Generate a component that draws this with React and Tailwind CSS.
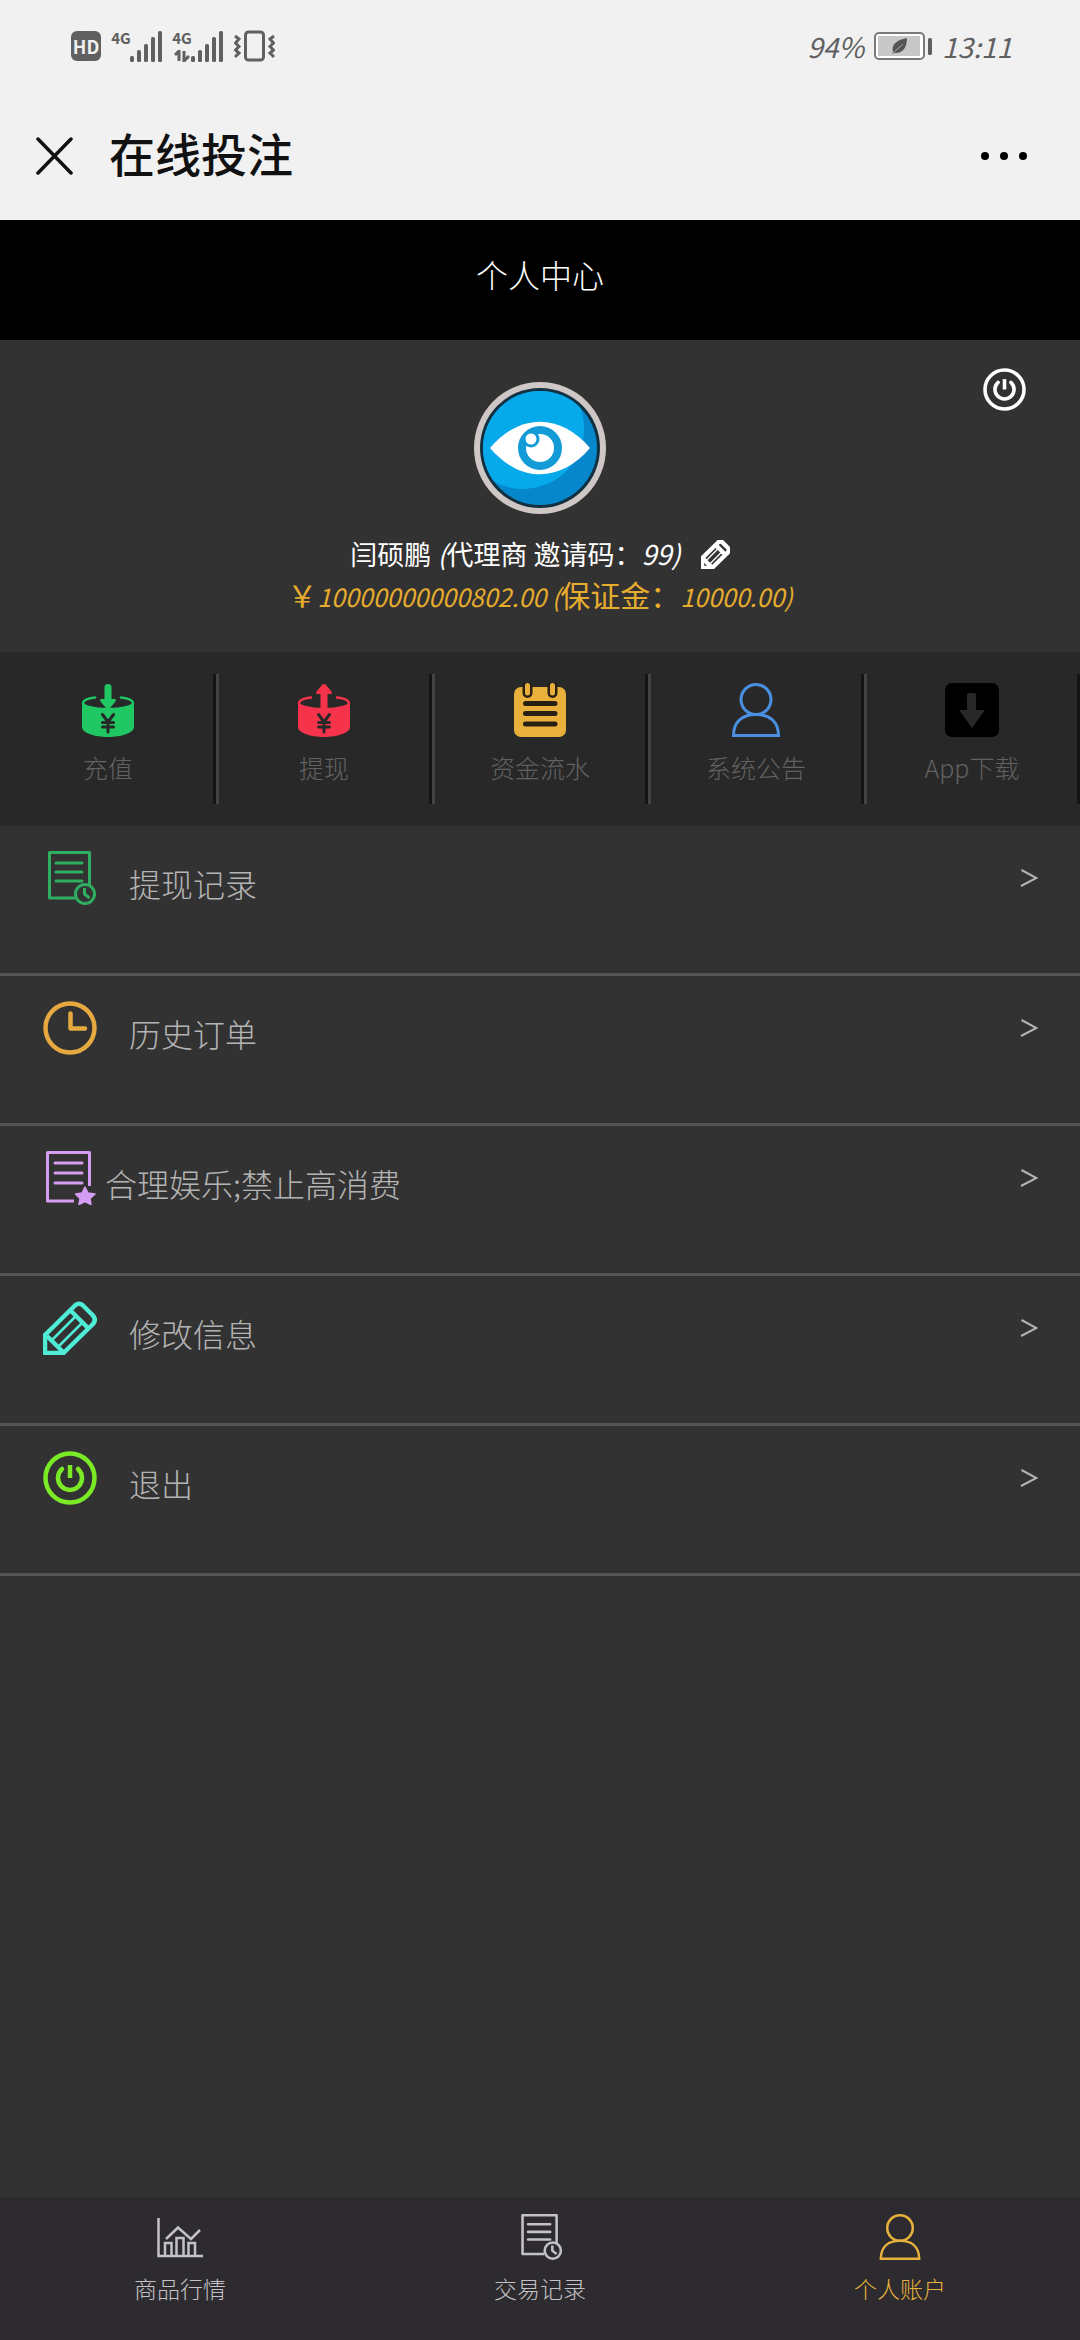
import React from "react";

const bars = [
  [0, 26, 6],
  [7, 20, 12],
  [14, 14, 18],
  [21, 7, 25],
  [28, 1, 31],
];

function Signal({ data }) {
  return (
    <div className="flex items-start">
      <div className="flex h-8 w-[18px] flex-col items-center justify-between">
        <span className="text-[15px] leading-4 font-bold">4G</span>
        {data && (
          <svg width="16" height="12" viewBox="0 0 16 12" fill="none" stroke="currentColor" strokeWidth="3">
            <path d="M1 5 L5 1 V11" />
            <path d="M10 1 V11 L15 6" />
          </svg>
        )}
      </div>
      <svg width="32" height="32" viewBox="0 0 32 32" fill="currentColor">
        {bars.map(([x, y, h]) => (
          <rect key={x} x={x} y={y} width="4" height={h} rx="1.5" />
        ))}
      </svg>
    </div>
  );
}

function StatusBar() {
  return (
    <div className="flex h-[92px] items-center justify-between pr-[68px] pl-[71px] text-[#606060]">
      <div className="flex items-center gap-[11px]">
        <div className="flex size-[30px] items-center justify-center rounded-md bg-[#606060] text-[18px] leading-none font-bold text-[#f1f1f1]">
          HD
        </div>
        <Signal />
        <Signal data />
        <svg width="41" height="32" viewBox="0 0 41 32" fill="none" stroke="currentColor" strokeWidth="3">
          <rect x="11.5" y="2" width="18" height="28" rx="3" />
          <path d="M1 6 L5 9 L1.5 13 L5 16.500 L1.500 20 L5 23 L1 27" />
          <path d="M40 6 L36 9 L39.500 13 L36 16.500 L39.500 20 L36 23 L40 27" />
        </svg>
      </div>
      <div className="flex items-center gap-[10px] text-[28px] leading-none italic">
        <span>94%</span>
        <svg width="58" height="28" viewBox="0 0 58 28">
          <rect x="1" y="1" width="49" height="26" rx="4" fill="#fff" stroke="#7a7a7a" strokeWidth="2" />
          <rect x="4" y="4" width="42" height="20" fill="#c8c8c8" />
          <path d="M33 6 C22 8 17 13 19 20 L18 22 L20 21 C29 22 33 15 33 6 Z" fill="#555" />
          <path d="M19 21 L29 12" stroke="#aaa" strokeWidth="1" />
          <rect x="54" y="6" width="4" height="17" rx="1.5" fill="#606060" />
        </svg>
        <span>13:11</span>
      </div>
    </div>
  );
}

function TitleBar() {
  return (
    <div className="flex h-32 items-center pr-[53px] text-[#111] pl-9">
      <button aria-label="关闭">
        <svg width="37" height="38" viewBox="0 0 37 38" stroke="currentColor" strokeWidth="3.500" strokeLinecap="round">
          <path d="M2 2 L35 36 M35 2 L2 36" />
        </svg>
      </button>
      <h1 className="ml-9 pb-2 text-[46px] leading-none font-medium">在线投注</h1>
      <button aria-label="更多" className="ml-auto">
        <svg width="46" height="8" viewBox="0 0 46 8" fill="#000">
          <circle cx="4" cy="4" r="4" />
          <circle cx="23" cy="4" r="4" />
          <circle cx="42" cy="4" r="4" />
        </svg>
      </button>
    </div>
  );
}

function PowerIcon({ className }) {
  return (
    <svg className={className} viewBox="0 0 54 54" fill="none" stroke="currentColor" strokeWidth="4.500">
      <circle cx="27" cy="27" r="24.500" />
      <path d="M27 14 V27" />
      <path d="M19 18 A12 12 0 1 0 35 18" strokeLinecap="round" />
    </svg>
  );
}

function PencilIcon({ className, width }) {
  return (
    <svg className={className} viewBox="0 0 54 54" fill="none" stroke="currentColor" strokeWidth={width} strokeLinejoin="round">
      <path d="M2 52 V34 L32 4.500 Q36 1 40 4.500 L49 13.500 Q54 18 50 23 L20.500 52 Z" />
      <path d="M27 9 L45 27" />
      <path d="M4 35 L20 51" />
      <path d="M9 39 L33 15 M16 45 L39 22" strokeWidth="2.500" />
    </svg>
  );
}

function UserIcon({ className }) {
  return (
    <svg className={className} viewBox="0 0 54 54" fill="none" stroke="currentColor" strokeWidth="3">
      <circle cx="27" cy="16.500" r="15" />
      <path d="M4.500 52.500 C4.500 38 14 31.500 27 31.500 C40 31.500 49.500 38 49.500 52.500 Z" />
    </svg>
  );
}

function DocClockIcon({ className }) {
  return (
    <svg className={className} viewBox="0 0 54 54" fill="none" stroke="currentColor" strokeWidth="3">
      <path d="M32 47 H6.500 V1.500 H46.500 V34" strokeLinejoin="round" />
      <path d="M13 12 H39 M13 21 H39 M13 30 H39" strokeLinecap="round" />
      <circle cx="42" cy="43" r="9.500" />
      <path d="M41.500 37 V43 L46.500 47" />
    </svg>
  );
}

function DocStarIcon({ className }) {
  return (
    <svg className={className} viewBox="0 0 54 54" fill="none" stroke="currentColor" strokeWidth="3">
      <path d="M31 50 H4.500 V1.500 H46.500 V35" strokeLinejoin="round" />
      <path d="M12 12 H39 M12 22 H39 M12 32 H39" strokeLinecap="round" />
      <path
        d="M42 36 L45 42 L52 43 L47 47.500 L48 53.500 L42 50.500 L36 53.500 L37 47.500 L32.500 43 L39 42 Z"
        fill="currentColor"
        strokeWidth="1.500"
        strokeLinejoin="round"
      />
    </svg>
  );
}

function ClockIcon({ className }) {
  return (
    <svg className={className} viewBox="0 0 54 54" fill="none" stroke="currentColor" strokeWidth="4.500">
      <circle cx="27" cy="27" r="24.500" />
      <path d="M27.500 12.500 V27.500 H42" strokeLinecap="round" strokeLinejoin="round" />
    </svg>
  );
}

function CoinIcon({ className, up }) {
  return (
    <svg className={className} viewBox="0 0 54 54" fill="none">
      <path
        d="M1 20 C6 25 16 26.500 27 26.500 C38 26.500 48 25 53 20 V44 C53 50 40 54 27 54 C14 54 1 50 1 44 Z"
        fill="currentColor"
      />
      <path
        d="M14 14.500 C7 15.500 2 17 2 20 C2 23 12 26 27 26 C42 26 52 23 52 20 C52 17 47 15.500 40 14.500"
        stroke="currentColor"
        strokeWidth="2.500"
        strokeLinecap="round"
      />
      {up ? (
        <path d="M23.500 25 V11 H20 Q18 10 20 8 L25 2 Q27 0 29 2 L34 8 Q36 10 34 11 H30.500 V25 Z" fill="currentColor" />
      ) : (
        <path d="M23.500 4 Q23.500 1 27 1 Q30.500 1 30.500 4 V16 H34 Q36 17 34 19 L29 25 Q27 27 25 25 L20 19 Q18 17 20 16 H23.500 Z" fill="currentColor" />
      )}
      <path d="M21.500 31.500 L27 39 L32.500 31.500 M27 39 V49 M21.500 39.500 H32.500 M21.500 44 H32.500" stroke="#282828" strokeWidth="3" strokeLinecap="round" />
    </svg>
  );
}

function NoteIcon({ className }) {
  return (
    <svg className={className} viewBox="0 0 54 54" fill="none" strokeLinecap="round">
      <rect x="1" y="4" width="52" height="50" rx="7" fill="currentColor" />
      <path d="M14.500 2 V10 M39.500 2 V10" stroke="#282015" strokeWidth="10" />
      <path d="M14.500 2.500 V10 M39.500 2.500 V10" stroke="currentColor" strokeWidth="5" />
      <path d="M12.500 20.500 H42 M12.500 30.500 H42 M12.500 41 H42" stroke="#282015" strokeWidth="5" />
    </svg>
  );
}

function DownloadIcon({ className }) {
  return (
    <svg className={className} viewBox="0 0 54 54">
      <rect width="54" height="54" rx="7" fill="#000" />
      <path d="M22 12 Q22 10 24 10 H29 Q31 10 31 12 V27 H40 L27 45 L14 27 H22 Z" fill="#282828" />
    </svg>
  );
}

function ChartIcon({ className }) {
  return (
    <svg className={className} viewBox="0 0 46 46" fill="none" stroke="currentColor" strokeWidth="2.500">
      <path d="M1.500 4 V42 H46" />
      <path d="M9 25 L21 13.500 L34 25 L43 16" />
      <path d="M8 42 V29 H14.500 V42 M19.500 42 V24 H26.500 V42 M31.500 42 V29 H38 V42" />
    </svg>
  );
}

function Avatar() {
  return (
    <svg className="size-[132px]" viewBox="0 0 132 132" role="img" aria-label="头像">
      <defs>
        <clipPath id="disc">
          <circle cx="66" cy="66" r="57" />
        </clipPath>
      </defs>
      <circle cx="66" cy="66" r="66" fill="#cfc7c6" />
      <circle cx="66" cy="66" r="60" fill="#12303f" />
      <g clipPath="url(#disc)">
        <rect width="132" height="132" fill="#0787cb" />
        <circle cx="49" cy="46" r="61" fill="#06a9ea" />
      </g>
      <path d="M16 66 C46 31 86 31 116 66 C86 101 46 101 16 66 Z" fill="#fff" />
      <circle cx="66" cy="66" r="22" fill="#129bd6" />
      <circle cx="66" cy="66" r="14" fill="#fff" />
      <circle cx="57" cy="57" r="7" fill="#fff" stroke="#129bd6" strokeWidth="3" />
    </svg>
  );
}

function Profile() {
  return (
    <section className="relative flex h-[312px] flex-col items-center pt-[42px]">
      <Avatar />
      <div className="mt-6 flex items-center gap-5 text-[27px] leading-8 text-white">
        <span>
          闫硕鹏 <i>(</i>代理商 邀请码：<i>99)</i>
        </span>
        <button aria-label="编辑">
          <PencilIcon className="size-[29px]" width="8" />
        </button>
      </div>
      <p className="mt-1 text-[30px] leading-10 text-[#e6ac2d]">
        ￥<i className="text-[25px]">10000000000802.00 (</i>保证金：<i className="text-[25px]">10000.00)</i>
      </p>
      <button aria-label="退出登录" className="absolute top-7 right-[54px] text-white">
        <PowerIcon className="size-[43px]" />
      </button>
    </section>
  );
}

const actions = [
  { label: "充值", icon: <CoinIcon className="size-[54px] text-[#20c763]" /> },
  { label: "提现", icon: <CoinIcon up className="size-[54px] text-[#f5334b]" /> },
  { label: "资金流水", icon: <NoteIcon className="size-[54px] text-[#eab03c]" /> },
  { label: "系统公告", icon: <UserIcon className="size-[54px] text-[#4a90e2]" /> },
  { label: "App下载", icon: <DownloadIcon className="size-[54px]" /> },
];

const rows = [
  { label: "提现记录", icon: <DocClockIcon className="size-[54px] text-[#2fae62]" />, gap: "ml-8" },
  { label: "历史订单", icon: <ClockIcon className="size-[54px] text-[#e5a93f]" />, gap: "ml-8" },
  { label: "合理娱乐;禁止高消费", icon: <DocStarIcon className="size-[54px] text-[#d49cf3]" />, gap: "ml-2" },
  { label: "修改信息", icon: <PencilIcon width="4.500" className="size-[54px] text-[#4fecd6]" />, gap: "ml-8" },
  { label: "退出", icon: <PowerIcon className="size-[54px] text-[#7bea26]" />, gap: "ml-8" },
];

const tabs = [
  { label: "商品行情", icon: <ChartIcon className="size-[46px]" />, color: "text-[#c4c2c6]" },
  { label: "交易记录", icon: <DocClockIcon className="size-[46px]" />, color: "text-[#c4c2c6]" },
  { label: "个人账户", icon: <UserIcon className="size-[46px]" />, color: "text-[#e6b23c]" },
];

export default function App() {
  return (
    <div className="flex min-h-screen flex-col bg-[#333232] font-['Noto_Sans_CJK_SC',sans-serif]">
      <header className="bg-[#f1f1f1]">
        <StatusBar />
        <TitleBar />
      </header>
      <div className="flex h-[120px] items-center justify-center bg-black pb-3 text-white">
        <h2 className="text-[32px] leading-none font-light">个人中心</h2>
      </div>
      <main className="flex-1">
        <Profile />
        <section className="grid h-[174px] grid-cols-5 bg-[#282828] py-[22px]">
          {actions.map((a) => (
            <button
              key={a.label}
              className="flex flex-col items-center border-r-3 border-l-3 border-r-[#141414] border-l-[#434343] pt-[9px] first:border-l-transparent"
            >
              {a.icon}
              <span className="mt-[14px] text-[25px] leading-8 font-light text-[#626262]">{a.label}</span>
            </button>
          ))}
        </section>
        <nav>
          {rows.map((r) => (
            <a key={r.label} href="#" className="flex h-[150px] items-start border-b-3 border-[#555] pt-[25px] pr-[42px] pl-[43px] text-[#b4b4b4]">
              {r.icon}
              <span className={`${r.gap} mt-2 text-[32px] leading-[48px] font-light`}>{r.label}</span>
              <svg className="mt-[18px] ml-auto" width="18" height="18" viewBox="0 0 18 18" fill="none" stroke="currentColor" strokeWidth="2">
                <path d="M1.500 1 L16.500 9 L1 17" />
              </svg>
            </a>
          ))}
        </nav>
      </main>
      <footer className="grid h-[143px] grid-cols-3 bg-[#2d2b2f]">
        {tabs.map((t) => (
          <a key={t.label} href="#" className={`flex flex-col items-center pt-[17px] ${t.color}`}>
            {t.icon}
            <span className="mt-3 text-[23px] leading-8 font-light">{t.label}</span>
          </a>
        ))}
      </footer>
    </div>
  );
}
